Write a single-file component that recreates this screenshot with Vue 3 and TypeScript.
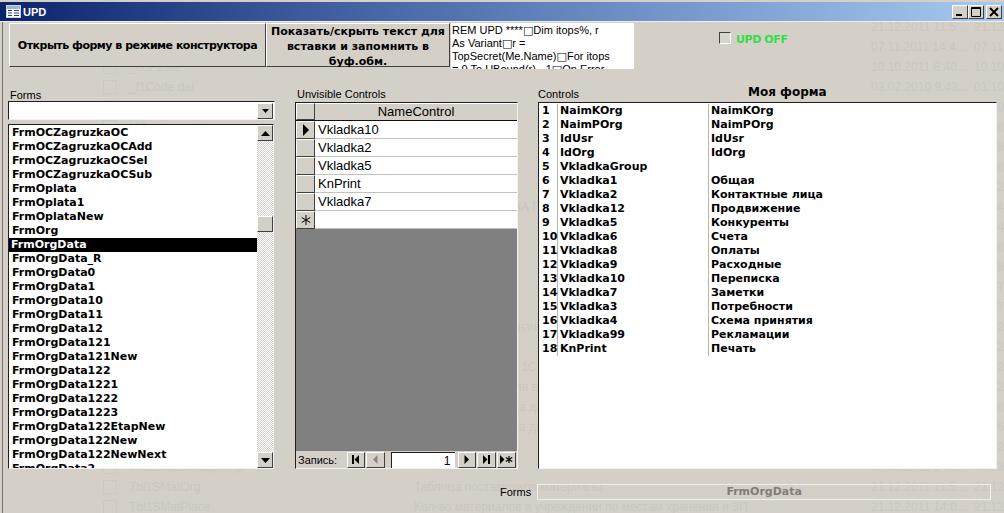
<script setup lang="ts">
const forms = [
  'FrmOCZagruzkaOC', 'FrmOCZagruzkaOCAdd', 'FrmOCZagruzkaOCSel', 'FrmOCZagruzkaOCSub',
  'FrmOplata', 'FrmOplata1', 'FrmOplataNew', 'FrmOrg', 'FrmOrgData', 'FrmOrgData_R',
  'FrmOrgData0', 'FrmOrgData1', 'FrmOrgData10', 'FrmOrgData11', 'FrmOrgData12',
  'FrmOrgData121', 'FrmOrgData121New', 'FrmOrgData122', 'FrmOrgData1221', 'FrmOrgData1222',
  'FrmOrgData1223', 'FrmOrgData122EtapNew', 'FrmOrgData122New', 'FrmOrgData122NewNext',
  'FrmOrgData2',
]

const hidden = ['Vkladka10', 'Vkladka2', 'Vkladka5', 'KnPrint', 'Vkladka7']

const controls = [
  ['NaimKOrg', 'NaimKOrg'], ['NaimPOrg', 'NaimPOrg'], ['IdUsr', 'IdUsr'], ['IdOrg', 'IdOrg'],
  ['VkladkaGroup', ''], ['Vkladka1', 'Общая'], ['Vkladka2', 'Контактные лица'],
  ['Vkladka12', 'Продвижение'], ['Vkladka5', 'Конкуренты'], ['Vkladka6', 'Счета'],
  ['Vkladka8', 'Оплаты'], ['Vkladka9', 'Расходные'], ['Vkladka10', 'Переписка'],
  ['Vkladka7', 'Заметки'], ['Vkladka3', 'Потребности'], ['Vkladka4', 'Схема принятия'],
  ['Vkladka99', 'Рекламации'], ['KnPrint', 'Печать'],
]

// database window that shows through the transparent form
const ghost = [
  ['~MoveTblSecret', 'Описание', '21.12.2011 11:5...', '21.12'],
  ['_MoveTblSecret1', '', '21.12.2011 11:5...', '21.12'],
  ['', '', '07.11.2011 14:4...', '07.11'],
  ['_00Paste', '', '10.10.2011 8:40...', '10.10'],
  ['_f1Code del', '', '03.02.2010 9:43...', '01.10'],
  ['_ZNUM', '', '20.10.2011 12:0...', '20.10'],
  ['MSysAccessStorage', '', '17.08.2007 19:2...', '17.08'],
  ['MSysAccessXML', '', '21.08.2007 10:5...', '21.08'],
  ['MSysACEs', '', '17.08.2007 19:2...', '17.08'],
  ['MSysAllFormsControls', '', '23.12.2011 11:0...', '23.12'],
  ['MSysAllFormsControls1', 'ДЛЯ ПЕРЕНОСА НА ПЕРВ', '19.04.2011 12:2...', '19.04'],
  ['MSysObjects', '', '14.04.2011 12:0...', '17.04'],
  ['MSysQueries', '', '17.08.2007 19:2...', '17.08'],
  ['MSysRelationships', '', '17.08.2007 19:2...', '17.08'],
  ['RASPZN1', '', '21.07.2011 16:5...', '21.07'],
  ['RASPZN11', '', '22.07.2011 10:5...', '22.07'],
  ['Tbl0', 'Таблица с одним значением', '21.12.2011 11:5...', '21.12'],
  ['Tbl01', '', '21.12.2011 11:5...', '21.12'],
  ['Tbl1SDir', 'Пути для работы с 1С', '21.12.2011 11:5...', '21.12'],
  ['Tbl1SEdIzm', 'Единицы измерения взятые из 1С', '21.12.2011 14:3...', '21.12'],
  ['Tbl1SExportRaspZN', 'Временная таблица для экспорта в 1С RaspZN', '05.12.2009 16:0...', '17.08'],
  ['Tbl1SExportRaspZN_New', 'Временная таблица для экспорта в 1С RaspZN', '06.07.2011 14:4...', '27.06'],
  ['Tbl1SImportType', '', '21.12.2011 11:5...', '21.12'],
  ['Tbl1SMatInRaspTmp', '', '09.03.2011 14:3...', '09.03'],
  ['Tbl1SMatOrg', 'Таблица поставщиков материалы', '21.12.2011 11:5...', '21.12'],
  ['Tbl1SMatPlace', 'Кол-во материалов в учреждении по местам хранения и ЗП', '21.12.2011 14:0...', '21.12'],
]
</script>

<template>
  <div class="window">
    <div class="ghost">
      <div v-for="(g, i) in ghost" :key="i" class="ghost-row">
        <span class="ghost-ico"></span>
        <span class="ghost-name">{{ g[0] }}</span>
        <span class="ghost-desc">{{ g[1] }}</span>
        <span class="ghost-date">{{ g[2] }}</span>
        <span class="ghost-mod">{{ g[3] }}</span>
      </div>
    </div>

    <header class="titlebar">
      <svg class="app-icon" width="15" height="13" viewBox="0 0 15 13">
        <rect x="0.5" y="0.5" width="14" height="12" fill="#fff" stroke="#c8d4e8" />
        <rect x="1" y="1" width="13" height="3" fill="#9db4d8" />
        <path d="M2 5.500h4M2 8h4M2 10.500h4M8 5.500h5M8 8h5M8 10.500h5" stroke="#24407c" stroke-width="1.200" />
      </svg>
      <span class="title">UPD</span>
      <div class="win-btns">
        <button class="win-btn">
          <svg width="10" height="10" viewBox="0 0 10 10"><rect x="1" y="7" width="6" height="2" fill="#000" /></svg>
        </button>
        <button class="win-btn">
          <svg width="10" height="10" viewBox="0 0 10 10"><path d="M0.500 0.500h9v9h-9zM0.500 1.500h9" fill="none" stroke="#000" /></svg>
        </button>
        <button class="win-btn close">
          <svg width="10" height="10" viewBox="0 0 10 10"><path d="M1 1l8 8M9 1l-8 8" stroke="#000" stroke-width="1.800" /></svg>
        </button>
      </div>
    </header>

    <div class="content">
      <div class="toprow">
        <button class="big-btn first">Открыть форму в режиме конструктора</button>
        <button class="big-btn second">Показать/скрыть текст для вставки и запомнить в буф.обм.</button>
        <div class="code">
          <div>REM UPD ****<span class="gl">□</span>Dim itops%, r</div>
          <div>As Variant<span class="gl">□</span>r =</div>
          <div>TopSecret(Me.Name)<span class="gl">□</span>For itops</div>
          <div>= 0 To UBound(r) - 1<span class="gl">□</span>On Error</div>
        </div>
        <label class="upd-off"><span class="check"></span>UPD OFF</label>
      </div>

      <div class="main">
        <section class="col">
          <div class="lbl forms-lbl">Forms</div>
          <div class="combo">
            <span class="combo-input"></span>
            <span class="sb-btn">
              <svg width="7" height="4" viewBox="0 0 7 4"><path d="M0 0h7L3.500 4z" fill="#000" /></svg>
            </span>
          </div>
          <div class="listbox">
            <div class="list-items">
              <div v-for="f in forms" :key="f" class="item" :class="{ sel: f === 'FrmOrgData' }">{{ f }}</div>
            </div>
            <div class="scrollbar">
              <span class="sb-btn">
                <svg width="9" height="5" viewBox="0 0 9 5"><path d="M0 5h9L4.500 0z" fill="#000" /></svg>
              </span>
              <span class="sb-thumb"></span>
              <span class="sb-btn end">
                <svg width="9" height="5" viewBox="0 0 9 5"><path d="M0 0h9L4.500 5z" fill="#000" /></svg>
              </span>
            </div>
          </div>
        </section>

        <section class="col">
          <div class="lbl">Unvisible Controls</div>
          <div class="sheet">
            <div class="sheet-head">
              <span class="sel-cell"></span>
              <span class="head-cell">NameControl</span>
            </div>
            <div v-for="(h, i) in hidden" :key="h" class="sheet-row">
              <span class="sel-cell">
                <svg v-if="i === 0" width="8" height="12" viewBox="0 0 8 12"><path d="M1 0l6 6-6 6z" fill="#000" /></svg>
              </span>
              <span class="cell">{{ h }}</span>
            </div>
            <div class="sheet-row">
              <span class="sel-cell">
                <svg width="10" height="10" viewBox="0 0 10 10"><path d="M5 0v10M0.700 2.500l8.600 5M0.700 7.500l8.600-5" stroke="#000" stroke-width="1" /></svg>
              </span>
              <span class="cell"></span>
            </div>
            <div class="sheet-empty"></div>
            <div class="nav">
              <span class="nav-lbl">Запись:</span>
              <button class="nav-btn">
                <svg width="9" height="9" viewBox="0 0 9 9"><path d="M1 0h2v9H1zM8 0v9L3.500 4.500z" fill="#000" /></svg>
              </button>
              <button class="nav-btn">
                <svg width="9" height="9" viewBox="0 0 9 9"><path d="M6.500 0v9L2 4.500z" fill="#8a8780" /></svg>
              </button>
              <span class="nav-input">1</span>
              <button class="nav-btn next">
                <svg width="9" height="9" viewBox="0 0 9 9"><path d="M2.500 0v9L7 4.500z" fill="#000" /></svg>
              </button>
              <button class="nav-btn">
                <svg width="9" height="9" viewBox="0 0 9 9"><path d="M1 0v9l4.500-4.500zM6 0h2v9H6z" fill="#000" /></svg>
              </button>
              <button class="nav-btn">
                <svg width="13" height="9" viewBox="0 0 13 9"><path d="M0 0v9l4.500-4.500z" fill="#000" /><path d="M9 1v7M5.800 2.600l6.400 3.800M5.800 6.400l6.400-3.800" stroke="#000" stroke-width="1.200" /></svg>
              </button>
            </div>
          </div>
        </section>

        <section class="col">
          <div class="lbl-row">
            <span class="lbl">Controls</span>
            <span class="my-form">Моя форма</span>
          </div>
          <div class="ctl-list">
            <div v-for="(c, i) in controls" :key="i" class="ctl-row">
              <span class="ctl-num">{{ i + 1 }}</span>
              <span class="ctl-name">{{ c[0] }}</span>
              <span class="ctl-cap">{{ c[1] }}</span>
            </div>
          </div>
        </section>
      </div>

      <div class="bottom">
        <span class="lbl">Forms</span>
        <div class="form-field">FrmOrgData</div>
      </div>
    </div>
  </div>
</template>

<style>
html, body {
  margin: 0;
  background: #d4d0c8;
}
</style>

<style scoped>
.window {
  position: relative;
  display: flex;
  flex-direction: column;
  width: 1004px;
  height: 513px;
  overflow: hidden;
  box-sizing: border-box;
  padding-top: 2px;
  background: #d4d0c8;
  font-family: "Liberation Sans", Arial, sans-serif;
  color: #000;
}

.ghost {
  position: absolute;
  top: -3px;
  left: 0;
  right: 0;
  color: #cac7bf;
  font-size: 12px;
}

.ghost-row {
  display: flex;
  align-items: center;
  height: 20px;
  white-space: nowrap;
}

.ghost-ico {
  width: 12px;
  height: 12px;
  margin-left: 103px;
  border: 1px solid #cdcac2;
  flex: none;
}

.ghost-name {
  width: 285px;
  margin-left: 12px;
  flex: none;
}

.ghost-desc {
  width: 457px;
  flex: none;
}

.ghost-date {
  width: 103px;
  flex: none;
}

.titlebar {
  position: relative;
  display: flex;
  align-items: center;
  flex: none;
  height: 19px;
  padding: 0 2px 0 6px;
  background: linear-gradient(90deg, #0a246a 0%, #3c5a9c 30%, #6d8fc6 62%, #a6caf0 100%);
}

.app-icon {
  flex: none;
}

.title {
  margin-left: 2px;
  font-size: 11px;
  font-weight: 700;
  color: #fff;
}

.win-btns {
  display: flex;
  margin-left: auto;
}

.win-btn {
  display: flex;
  align-items: center;
  justify-content: center;
  width: 16px;
  height: 14px;
  padding: 0;
  background: #d4d0c8;
  border: 1px solid;
  border-color: #fff #404040 #404040 #fff;
}

.win-btn.close {
  margin-left: 2px;
}

.content {
  position: relative;
  flex: 1;
  padding: 1px 7px 0 8px;
  border-top: 1px solid #f0eee8;
  box-shadow: inset 2px 0 0 #d4d0c8, inset 3px 0 0 #77746e;
}

.toprow {
  display: flex;
  height: 46px;
  align-items: flex-start;
}

.big-btn {
  height: 44px;
  padding: 0 2px;
  background: #d4d0c8;
  border: 1px solid;
  border-color: #fff #404040 #404040 #fff;
  font-family: "DejaVu Sans", sans-serif;
  font-size: 11px;
  font-weight: 700;
  line-height: 15px;
  color: #000;
}

.big-btn.first {
  width: 257px;
  margin-left: 1px;
  white-space: nowrap;
  letter-spacing: -0.5px;
}

.big-btn.second {
  width: 184px;
}

.code {
  width: 183px;
  height: 46px;
  margin-left: 1px;
  padding: 1px 1px 0;
  box-sizing: border-box;
  overflow: hidden;
  background: #fff;
  font-size: 11px;
  line-height: 13px;
  white-space: nowrap;
}

.gl {
  font-family: "DejaVu Sans", sans-serif;
}

.upd-off {
  display: flex;
  align-items: center;
  margin: 10px 0 0 85px;
  font-family: "DejaVu Sans", sans-serif;
  font-size: 11px;
  font-weight: 700;
  letter-spacing: -0.4px;
  color: #33dd44;
}

.check {
  width: 12px;
  height: 12px;
  margin: -3px 5px 0 0;
  box-sizing: border-box;
  background: #d8d5ce;
  border: 1px solid;
  border-color: #404040 #fff #fff #404040;
}

.main {
  display: grid;
  grid-template-columns: 267px 223px 459px;
  column-gap: 20px;
  margin-top: 18px;
}

.col {
  display: flex;
  flex-direction: column;
  min-width: 0;
}

.lbl {
  font-size: 11px;
  line-height: 14px;
  color: #000;
  white-space: nowrap;
}

.col > .lbl {
  margin-left: 2px;
}

.lbl-row {
  display: flex;
  height: 14px;
}

.my-form {
  margin: -3px 0 0 169px;
  font-family: "DejaVu Sans", sans-serif;
  font-size: 12px;
  font-weight: 700;
  line-height: 16px;
}

.forms-lbl {
  margin-top: 1px;
  margin-bottom: -1px;
}

.combo {
  display: flex;
  align-items: center;
  height: 19px;
  box-sizing: border-box;
  background: #fff;
  border: 1px solid;
  border-color: #202020 #f4f2ee #f4f2ee #202020;
  padding-right: 1px;
}

.combo-input {
  flex: 1;
}

.sb-btn {
  display: flex;
  align-items: center;
  justify-content: center;
  flex: none;
  width: 16px;
  height: 16px;
  box-sizing: border-box;
  background: #d4d0c8;
  border: 1px solid;
  border-color: #fff #404040 #404040 #fff;
}

.listbox {
  display: flex;
  height: 345px;
  margin-top: 4px;
  margin-right: 1px;
  box-sizing: border-box;
  overflow: hidden;
  background: #fff;
  border: 1px solid;
  border-color: #202020 #f4f2ee #f4f2ee #202020;
}

.list-items {
  flex: 1;
  overflow: hidden;
  min-width: 0;
  padding-top: 1px;
}

.item {
  height: 14px;
  padding-left: 3px;
  font-family: "DejaVu Sans", sans-serif;
  font-size: 11px;
  font-weight: 700;
  line-height: 14px;
  white-space: nowrap;
}

.item.sel {
  padding-left: 2px;
  background: #000;
  color: #fff;
}

.scrollbar {
  display: flex;
  flex-direction: column;
  flex: none;
  width: 16px;
  background-color: #fff;
  background-image: conic-gradient(#d4d0c8 25%, #fff 0 50%, #d4d0c8 0 75%, #fff 0);
  background-size: 2px 2px;
}

.sb-thumb {
  width: 16px;
  height: 16px;
  margin-top: 75px;
  box-sizing: border-box;
  background: #d4d0c8;
  border: 1px solid;
  border-color: #fff #404040 #404040 #fff;
}

.sb-btn.end {
  margin-top: auto;
}

.sheet {
  display: flex;
  flex-direction: column;
  height: 367px;
  margin-top: 1px;
  box-sizing: border-box;
  border: 1px solid;
  border-color: #202020 #f4f2ee #f4f2ee #202020;
  font-size: 13px;
}

.sheet-head,
.sheet-row {
  display: flex;
  height: 18px;
  flex: none;
  box-sizing: border-box;
}

.sheet-head {
  border-bottom: 1px solid #101010;
}

.sel-cell {
  display: flex;
  align-items: center;
  justify-content: center;
  flex: none;
  width: 19px;
  box-sizing: border-box;
  background: #d4d0c8;
  border: 1px solid;
  border-color: #fff #404040 #404040 #fff;
}

.head-cell {
  flex: 1;
  text-align: center;
  line-height: 16px;
  background: #d4d0c8;
  border-top: 1px solid #fff;
}

.cell {
  flex: 1;
  padding-left: 3px;
  line-height: 17px;
  background: #fff;
  border-bottom: 1px solid #c4c2bc;
}

.sheet-empty {
  flex: 1;
  background: #808080;
}

.nav {
  display: flex;
  align-items: center;
  height: 17px;
  flex: none;
  background: #d4d0c8;
}

.nav-lbl {
  width: 51px;
  padding-left: 2px;
  box-sizing: border-box;
  font-size: 11px;
}

.nav-btn {
  display: flex;
  align-items: center;
  justify-content: center;
  width: 19px;
  height: 16px;
  padding: 0;
  margin-right: 1px;
  background: #d4d0c8;
  border: 1px solid;
  border-color: #fff #404040 #404040 #fff;
}

.nav-btn.next {
  margin-left: 3px;
}

.nav-input {
  width: 64px;
  height: 16px;
  margin-left: 5px;
  padding-right: 4px;
  box-sizing: border-box;
  text-align: right;
  line-height: 16px;
  font-size: 12px;
  background: #fff;
  border-top: 1px solid #202020;
  border-left: 1px solid #202020;
}

.ctl-list {
  height: 367px;
  margin-top: 1px;
  box-sizing: border-box;
  padding: 1px 0 0 2px;
  background: #fff;
  border: 1px solid;
  border-color: #202020 #f4f2ee #f4f2ee #202020;
  font-family: "DejaVu Sans", sans-serif;
  font-size: 11px;
  font-weight: 700;
}

.ctl-row {
  display: flex;
  height: 14px;
  line-height: 14px;
  white-space: nowrap;
}

.ctl-num {
  width: 17px;
  padding-left: 1px;
  box-sizing: border-box;
  border-right: 1px solid #b8b6b0;
}

.ctl-name {
  width: 151px;
  padding-left: 2px;
  box-sizing: border-box;
  border-right: 1px solid #b8b6b0;
}

.ctl-cap {
  padding-left: 2px;
}

.bottom {
  display: flex;
  align-items: center;
  margin-top: 15px;
}

.bottom .lbl {
  margin-left: 492px;
}

.form-field {
  width: 454px;
  height: 16px;
  margin-left: 6px;
  box-sizing: border-box;
  border: 1px solid #f0eee8;
  text-align: center;
  font-family: "DejaVu Sans", sans-serif;
  font-size: 11px;
  font-weight: 700;
  line-height: 14px;
  color: #807d78;
}
</style>
